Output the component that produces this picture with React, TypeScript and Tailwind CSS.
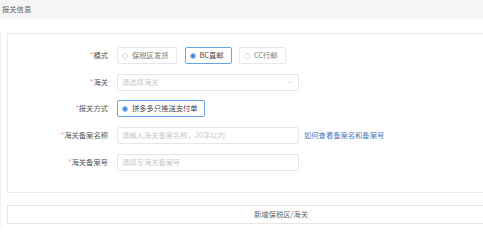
import React from "react";

const font = { fontFamily: '"Noto Sans CJK SC", "Noto Sans", sans-serif' };

interface RadioBoxProps {
    label: string;
    checked?: boolean;
    width: string;
}

const RadioBox: React.FC<RadioBoxProps> = ({ label, checked, width }) => {
    return (
        <div
            className={`${width} h-[17px] flex items-center pl-[4px] gap-[4px] rounded-[2px] border ${
                checked ? "border-[#6aa4ec] text-[#444]" : "border-[#e6e6e6] text-[#777]"
            }`}
        >
            <span
                className={`w-[6px] h-[6px] rounded-full flex items-center justify-center border ${
                    checked ? "border-[#8bb8f0]" : "border-[#dedede]"
                }`}
            >
                {checked && <span className="w-[4px] h-[4px] rounded-full bg-[#3d8be6]" />}
            </span>
            <span className="text-[7.3px] leading-none whitespace-nowrap">{label}</span>
        </div>
    );
};

const Row: React.FC<{ label: string; children: React.ReactNode }> = ({ label, children }) => {
    return (
        <div className="flex items-center h-[17px]">
            <div className="w-[100px] text-right text-[7.3px] leading-none text-[#555] whitespace-nowrap">
                <span className="text-[#f28a8a]">*</span>
                {label}
            </div>
            <div className="ml-[9px] flex items-center">{children}</div>
        </div>
    );
};

const TextInput: React.FC<{ placeholder: string }> = ({ placeholder }) => {
    return (
        <div className="w-[182px] h-[17px] flex items-center pl-[4px] border border-[#e6e6e6] rounded-[2px]">
            <span className="text-[7.3px] leading-none text-[#c8c8c8] whitespace-nowrap">{placeholder}</span>
        </div>
    );
};

export default function App() {
    return (
        <div className="w-[483px] h-[227px] overflow-hidden bg-white" style={font}>
            <div className="h-[19px] bg-[#f5f5f5] flex items-center pl-[2px]">
                <span className="text-[7.3px] leading-none text-[#666]">报关信息</span>
            </div>
            <div className="h-[208px] border-l border-[#f0f0f0]">
                <div className="ml-[6px] mt-[14px] w-[548px] h-[160px] border border-[#ebebeb] pt-[13px] flex flex-col gap-[9.7px]">
                    <Row label="模式">
                        <div className="flex gap-[7.5px]">
                            <RadioBox label="保税区发货" width="w-[60px]" />
                            <RadioBox label="BC直邮" width="w-[47px]" checked />
                            <RadioBox label="CC行邮" width="w-[47px]" />
                        </div>
                    </Row>
                    <Row label="海关">
                        <div className="w-[182px] h-[17px] flex items-center justify-between pl-[4px] pr-[5px] border border-[#e6e6e6] rounded-[2px]">
                            <span className="text-[7.3px] leading-none text-[#c8c8c8]">请选择海关</span>
                            <svg width="6" height="4" viewBox="0 0 6 4" fill="none">
                                <path d="M0.5 0.8 L3 3.2 L5.5 0.8" stroke="#cfcfcf" strokeWidth="0.8" />
                            </svg>
                        </div>
                    </Row>
                    <Row label="报关方式">
                        <RadioBox label="拼多多只推送支付单" width="w-[88px]" checked />
                    </Row>
                    <Row label="海关备案名称">
                        <TextInput placeholder="请输入海关备案名称，20字以内" />
                        <span className="ml-[5px] text-[7.3px] leading-none text-[#4a78c0] whitespace-nowrap">
                            如何查看备案名和备案号
                        </span>
                    </Row>
                    <Row label="海关备案号">
                        <TextInput placeholder="请填写海关备案号" />
                    </Row>
                </div>
                <div className="ml-[6px] mt-[12px] w-[548px] h-[19px] border border-[#e6e6e6] flex items-center justify-center">
                    <span className="text-[7.3px] leading-none text-[#666]">新增保税区/海关</span>
                </div>
            </div>
        </div>
    );
}
